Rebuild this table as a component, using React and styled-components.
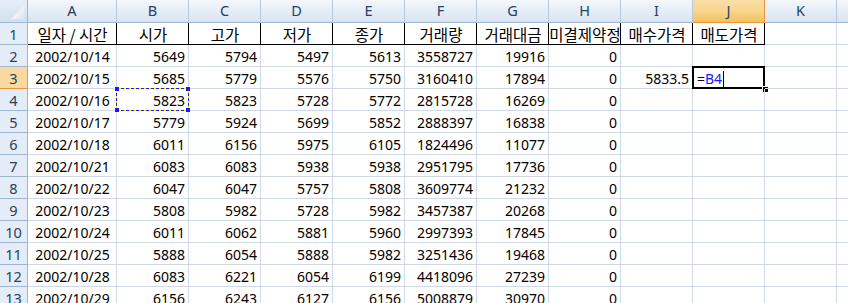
import styled, { createGlobalStyle, css } from 'styled-components';

const GlobalStyle = createGlobalStyle`
  html, body {
    margin: 0;
    padding: 0;
    background: #ffffff;
    overflow: hidden;
  }
`;

const GRID = '#d0d7e5';
const HEAD_LINE = '#9eb6ce';

export const Sheet = styled.div`
  display: grid;
  grid-template-columns: 28px 89px repeat(11, 72px);
  grid-template-rows: 23px repeat(13, 22px);
  width: 848px;
  height: 303px;
  overflow: hidden;
  font-family: 'Noto Sans', 'Noto Sans CJK KR', sans-serif;
  font-size: 14px;
  color: #000;
`;

export const Corner = styled.div`
  position: relative;
  box-sizing: border-box;
  background: linear-gradient(#e6eef8, #d3dfee);
  border-right: 1px solid ${HEAD_LINE};
  border-bottom: 1px solid ${HEAD_LINE};
  &::after {
    content: '';
    position: absolute;
    right: 3px;
    bottom: 3px;
    width: 13px;
    height: 13px;
    background: linear-gradient(135deg, #ffffff, #e0e5eb);
    clip-path: polygon(100% 0, 100% 100%, 0 100%);
  }
`;

const headBase = css`
  box-sizing: border-box;
  display: flex;
  align-items: center;
  justify-content: center;
  color: #27415f;
  font-family: 'Noto Sans', sans-serif;
  font-size: 14.5px;
  line-height: 1;
`;

export const ColHeader = styled.div`
  ${headBase}
  padding-bottom: 1px;
  border-right: 1px solid ${(p) => (p.$active ? '#f29536' : '#b7c8dc')};
  border-bottom: 1px solid ${(p) => (p.$active ? '#f29536' : HEAD_LINE)};
  background: ${(p) =>
    p.$active
      ? 'linear-gradient(#f9dfa8 0%, #f7d48b 55%, #f1c15f 100%)'
      : 'linear-gradient(#f4f7fb 0%, #e4ecf7 55%, #dae4f0 100%)'};
`;

export const RowHeader = styled.div`
  ${headBase}
  padding-top: 2px;
  border-right: 1px solid ${(p) => (p.$active ? '#f29536' : HEAD_LINE)};
  border-bottom: 1px solid ${(p) => (p.$active ? '#f29536' : HEAD_LINE)};
  background: ${(p) => (p.$active ? '#f9d99f' : '#e4ecf7')};
`;

export const Cell = styled.div`
  position: relative;
  box-sizing: border-box;
  display: flex;
  align-items: center;
  justify-content: ${(p) =>
    p.$align === 'right' ? 'flex-end' : p.$align === 'center' ? 'center' : 'flex-start'};
  padding: 3px 3px 0 4px;
  white-space: nowrap;
  overflow: ${(p) => (p.$open ? 'visible' : 'hidden')};
  line-height: 1;
  border-right: 1px solid ${(p) => (p.$ruled ? '#000' : GRID)};
  border-bottom: 1px solid ${(p) => (p.$ruled ? '#000' : GRID)};
`;

export const Title = styled.span`
  font-family: 'Noto Sans CJK KR', sans-serif;
  font-size: 15.5px;
`;

export const ActiveFrame = styled.div`
  position: absolute;
  left: -1px;
  top: -1px;
  right: -1px;
  bottom: -1px;
  border: 2px solid #000;
  pointer-events: none;
`;

export const FillHandle = styled.div`
  position: absolute;
  right: -4px;
  bottom: -4px;
  width: 5px;
  height: 5px;
  background: #000;
  border-top: 1px solid #fff;
  border-left: 1px solid #fff;
`;

export const RefFrame = styled.div`
  position: absolute;
  left: -1px;
  top: -1px;
  right: -1px;
  bottom: -1px;
  border: 1px solid #f4f000;
  &::after {
    content: '';
    position: absolute;
    inset: -1px;
    border: 1px dashed #1a1aff;
  }
`;

export const RefHandle = styled.div`
  position: absolute;
  width: 4px;
  height: 4px;
  background: #1a1aff;
  z-index: 1;
  ${(p) => (p.$y === 'top' ? 'top: -2px;' : 'bottom: -2px;')}
  ${(p) => (p.$x === 'left' ? 'left: -2px;' : 'right: -2px;')}
`;

export const Ref = styled.span`
  color: #1a1aff;
`;

export const Caret = styled.span`
  display: inline-block;
  width: 1px;
  height: 16px;
  background: #000;
  margin-left: 1px;
  vertical-align: middle;
`;

// L sits mostly past the right edge, so its letter is not visible
const columns = ['A', 'B', 'C', 'D', 'E', 'F', 'G', 'H', 'I', 'J', 'K', ''];
const titles = ['일자 / 시간', '시가', '고가', '저가', '종가', '거래량', '거래대금', '미결제약정', '매수가격', '매도가격'];

const rows = [
  ['2002/10/14', 5649, 5794, 5497, 5613, 3558727, 19916, 0],
  ['2002/10/15', 5685, 5779, 5576, 5750, 3160410, 17894, 0],
  ['2002/10/16', 5823, 5823, 5728, 5772, 2815728, 16269, 0],
  ['2002/10/17', 5779, 5924, 5699, 5852, 2888397, 16838, 0],
  ['2002/10/18', 6011, 6156, 5975, 6105, 1824496, 11077, 0],
  ['2002/10/21', 6083, 6083, 5938, 5938, 2951795, 17736, 0],
  ['2002/10/22', 6047, 6047, 5757, 5808, 3609774, 21232, 0],
  ['2002/10/23', 5808, 5982, 5728, 5982, 3457387, 20268, 0],
  ['2002/10/24', 6011, 6062, 5881, 5960, 2997393, 17845, 0],
  ['2002/10/25', 5888, 6054, 5888, 5982, 3251436, 19468, 0],
  ['2002/10/28', 6083, 6221, 6054, 6199, 4418096, 27239, 0],
  ['2002/10/29', 6156, 6243, 6127, 6156, 5008879, 30970, 0],
];

const renderDataCell = (rowNo, col, value) => {
  const key = `${rowNo}-${col}`;
  if (rowNo === 3 && col === 8) {
    return (
      <Cell key={key} $align="right">
        5833.5
      </Cell>
    );
  }
  if (rowNo === 3 && col === 9) {
    return (
      <Cell key={key} $open>
        <span>
          =<Ref>B4</Ref>
        </span>
        <Caret />
        <ActiveFrame />
        <FillHandle />
      </Cell>
    );
  }
  if (rowNo === 4 && col === 1) {
    return (
      <Cell key={key} $align="right" $open>
        {value}
        <RefFrame />
        <RefHandle $x="left" $y="top" />
        <RefHandle $x="right" $y="top" />
        <RefHandle $x="left" $y="bottom" />
        <RefHandle $x="right" $y="bottom" />
      </Cell>
    );
  }
  return (
    <Cell key={key} $align={col === 0 ? 'center' : 'right'}>
      {value}
    </Cell>
  );
};

const App = () => {
  return (
    <>
      <GlobalStyle />
      <Sheet>
        <Corner />
        {columns.map((c, i) => (
          <ColHeader key={`c${i}`} $active={c === 'J'}>
            {c}
          </ColHeader>
        ))}

        <RowHeader>1</RowHeader>
        {columns.map((c, i) => (
          <Cell key={`1-${i}`} $align="center" $ruled={i < titles.length}>
            {titles[i] && <Title>{titles[i]}</Title>}
          </Cell>
        ))}

        {rows.map((row, r) => {
          const rowNo = r + 2;
          return [
            <RowHeader key={`h${rowNo}`} $active={rowNo === 3}>
              {rowNo}
            </RowHeader>,
            ...columns.map((c, i) => renderDataCell(rowNo, i, row[i])),
          ];
        })}
      </Sheet>
    </>
  );
};

export default App;
